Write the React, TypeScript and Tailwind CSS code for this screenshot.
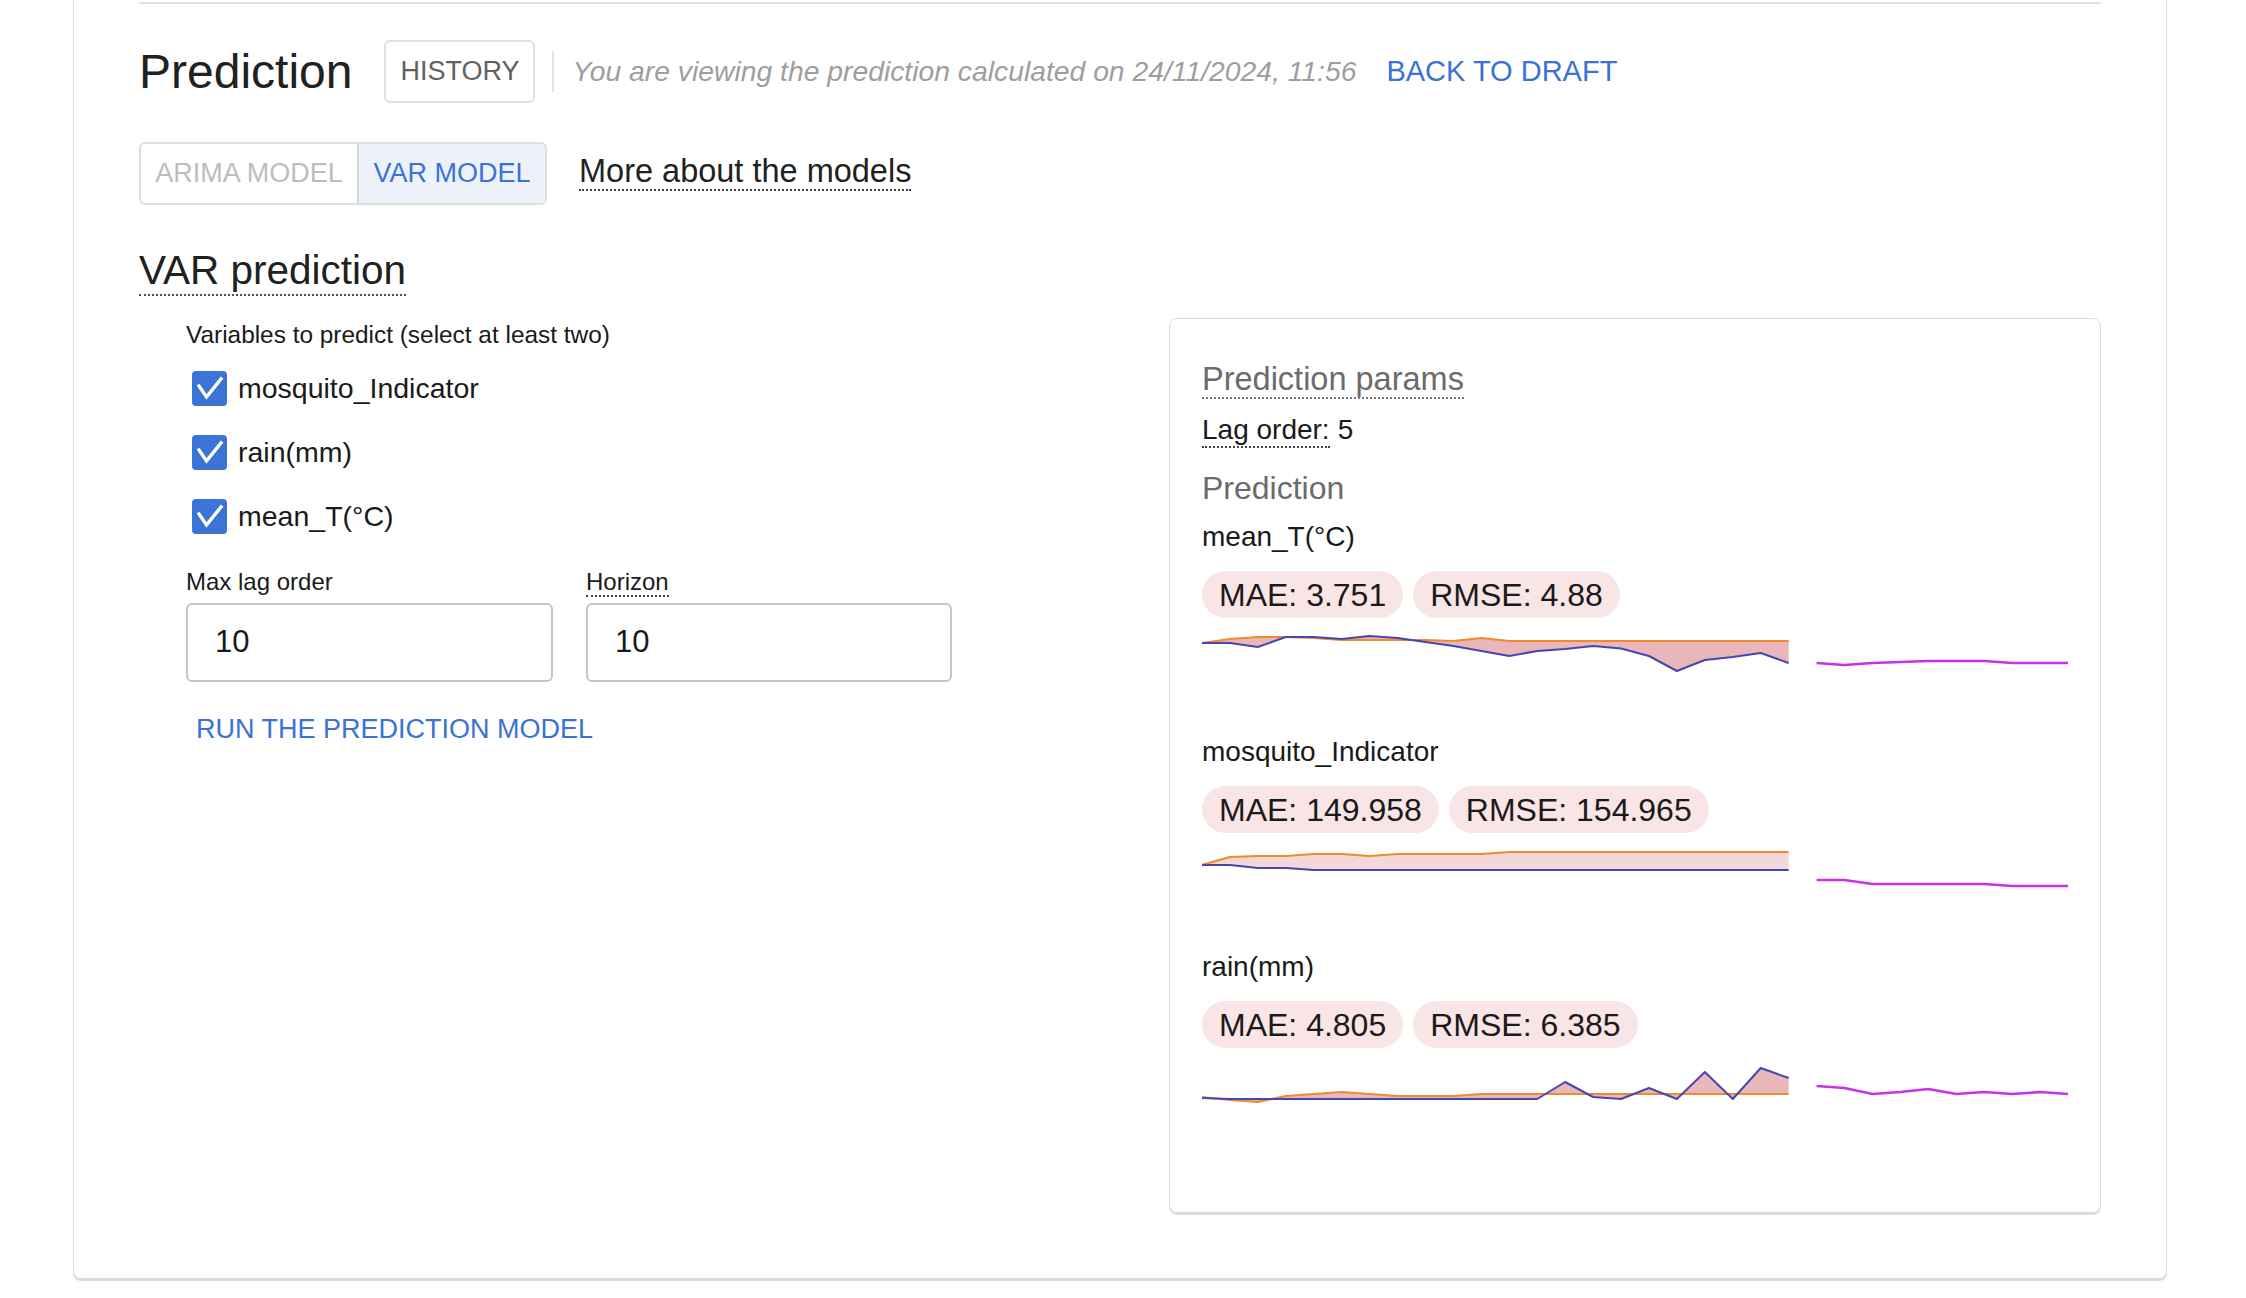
import React from "react";

const STEP = 866 / 31;

type ChartProps = {
  top: number;
  blue: number[];
  orange: number[];
  forecast: number[];
  fill: string;
};

function toPts(arr: number[], top: number, offset = 0) {
  return arr.map((y, i) => `${((i + offset) * STEP).toFixed(2)},${(y - top).toFixed(1)}`);
}

function Chart({ top, blue, orange, forecast, fill }: ChartProps) {
  const o = toPts(orange, top);
  const b = toPts(blue, top);
  const poly = [...o, ...[...b].reverse()].join(" ");
  return (
    <svg width="866" height="100" viewBox="0 0 866 100" className="block">
      <polygon points={poly} fill={fill} />
      <polyline points={o.join(" ")} fill="none" stroke="#ef8a2e" strokeWidth="2.2" strokeLinejoin="round" />
      <polyline points={b.join(" ")} fill="none" stroke="#4646b0" strokeWidth="2" strokeLinejoin="round" />
      <polyline points={toPts(forecast, top, 22).join(" ")} fill="none" stroke="#c833e6" strokeWidth="2.6" strokeLinejoin="round" />
    </svg>
  );
}

function Pill({ children }: { children: React.ReactNode }) {
  return (
    <div className="h-[47px] rounded-full bg-[#f9e4e6] px-[17px] flex items-center text-[32px] text-[#1a1a1a] leading-none whitespace-nowrap">
      {children}
    </div>
  );
}

function Section({
  label,
  mae,
  rmse,
  chart,
}: {
  label: string;
  mae: string;
  rmse: string;
  chart: ChartProps;
}) {
  return (
    <div className="mb-[14px]">
      <div className="text-[28px] leading-[36px] text-[#1a1a1a]">{label}</div>
      <div className="mt-[16px] flex gap-[10px]">
        <Pill>MAE: {mae}</Pill>
        <Pill>RMSE: {rmse}</Pill>
      </div>
      <div className="mt-[2px]">
        <Chart {...chart} />
      </div>
    </div>
  );
}

function CheckRow({ label }: { label: string }) {
  return (
    <div className="flex items-center h-[64px] pl-[6px]">
      <div className="w-[35px] h-[35px] rounded-[4px] bg-[#3b74d4] flex items-center justify-center">
        <svg width="35" height="35" viewBox="0 0 35 35">
          <polyline points="7,15 14.5,26 29,8" fill="none" stroke="#ffffff" strokeWidth="3.4" strokeLinecap="square" strokeLinejoin="miter" />
        </svg>
      </div>
      <span className="ml-[11px] text-[28.5px] text-[#1a1a1a]">{label}</span>
    </div>
  );
}

const chart1: ChartProps = {
  top: 618,
  blue: [641, 641, 645, 635, 635, 637, 634, 636, 640, 644, 649, 654, 649, 647, 644, 646.5, 654, 669, 658, 655, 651, 661],
  orange: [641, 637, 635, 635, 636, 638, 638, 638, 638, 639, 636, 639, 639, 639, 639, 639, 639, 639, 639, 639, 639, 639],
  forecast: [661, 663, 661, 660, 659, 659, 659, 661, 661, 661],
  fill: "#e9b7ba",
};

const chart2: ChartProps = {
  top: 834,
  blue: [864, 864, 867, 867, 869, 869, 869, 869, 869, 869, 869, 869, 869, 869, 869, 869, 869, 869, 869, 869, 869, 869],
  orange: [864, 856, 855, 855, 853, 853, 855, 853, 853, 853, 853, 851, 851, 851, 851, 851, 851, 851, 851, 851, 851, 851],
  forecast: [879, 879, 883, 883, 883, 883, 883, 885, 885, 885],
  fill: "#f3d7d9",
};

const chart3: ChartProps = {
  top: 1050,
  blue: [1098, 1099, 1099, 1099, 1099, 1099, 1099, 1099, 1099, 1099, 1099, 1099, 1099, 1082, 1097, 1099, 1088, 1099, 1072, 1099, 1068, 1078],
  orange: [1097, 1100, 1102, 1096, 1094, 1092, 1094, 1096, 1096, 1096, 1094, 1094, 1094, 1094, 1094, 1094, 1094, 1094, 1094, 1094, 1094, 1094],
  forecast: [1086, 1088, 1094, 1092, 1089, 1094, 1092, 1094, 1092, 1094],
  fill: "#e9b8bb",
};

export default function App() {
  return (
    <div className="min-h-screen bg-white font-['Liberation_Sans',Arial,Helvetica,sans-serif] text-[#212121]">
      <div className="ml-[73px] mr-[79px] border border-t-0 border-[#dcdcdc] rounded-b-[8px] shadow-[0_2px_0_#dcdcdc] pl-[65px] pr-[65px] pb-[65px]">
        <div className="pt-[2px]">
          <div className="h-[2px] bg-[#e0e0e0]" />
        </div>

        {/* Header row */}
        <div className="mt-[36px] flex items-center h-[63px]">
          <h1 className="text-[48px] leading-none text-[#212121] whitespace-nowrap">Prediction</h1>
          <button className="ml-[32px] h-[63px] w-[151px] rounded-[6px] border-2 border-[#e0e0e0] text-[27px] text-[#616161] flex items-center justify-center">
            HISTORY
          </button>
          <div className="ml-[17px] h-[41px] w-[2px] bg-[#e4e4e4]" />
          <span className="ml-[18px] italic text-[28.3px] text-[#9e9e9e] whitespace-nowrap">
            You are viewing the prediction calculated on 24/11/2024, 11:56
          </span>
          <button className="ml-[30px] text-[29px] text-[#3a72d5] whitespace-nowrap">BACK TO DRAFT</button>
        </div>

        {/* Tabs row */}
        <div className="mt-[39px] flex items-center">
          <div className="flex h-[63px] w-[408px] rounded-[6px] border-2 border-[#dedede] overflow-hidden">
            <div className="w-[216px] flex-none flex items-center justify-center text-[27px] text-[#bdbdbd] whitespace-nowrap">
              ARIMA MODEL
            </div>
            <div className="flex-1 border-l-2 border-[#d3d8e0] bg-[#edf2fa] flex items-center justify-center text-[27px] text-[#3a72d5] whitespace-nowrap">
              VAR MODEL
            </div>
          </div>
          <span className="ml-[32px] mb-[4px] text-[32.5px] leading-[36px] text-[#212121] border-b-2 border-dotted border-[#444] whitespace-nowrap">
            More about the models
          </span>
        </div>

        {/* VAR prediction heading */}
        <div className="mt-[41px] flex">
          <h2 className="text-[40.5px] leading-[48px] text-[#212121] border-b-2 border-dotted border-[#555] whitespace-nowrap">VAR prediction</h2>
        </div>

        {/* Two columns */}
        <div className="mt-[22px] flex">
          <div className="flex-1 pl-[47px] pt-[1px]">
            <div className="text-[24.4px] leading-[32px] text-[#1a1a1a] whitespace-nowrap">Variables to predict (select at least two)</div>
            <div className="mt-[5px]">
              <CheckRow label="mosquito_Indicator" />
              <CheckRow label="rain(mm)" />
              <CheckRow label="mean_T(°C)" />
            </div>
            <div className="mt-[20px] flex gap-[33px]">
              <div className="w-[367px]">
                <div className="flex">
                  <span className="text-[24px] leading-[28px] text-[#1a1a1a]">Max lag order</span>
                </div>
                <div className="mt-[7px] h-[79px] rounded-[6px] border-2 border-[#c6c6c6] flex items-center pl-[27px] text-[31px] text-[#1a1a1a]">
                  10
                </div>
              </div>
              <div className="w-[366px]">
                <div className="flex">
                  <span className="text-[24px] leading-[27px] text-[#1a1a1a] border-b-2 border-dotted border-[#444]">Horizon</span>
                </div>
                <div className="mt-[6px] h-[79px] rounded-[6px] border-2 border-[#c6c6c6] flex items-center pl-[27px] text-[31px] text-[#1a1a1a]">
                  10
                </div>
              </div>
            </div>
            <button className="mt-[29px] px-[10px] text-[27px] leading-[36px] text-[#3a72d5] whitespace-nowrap">
              RUN THE PREDICTION MODEL
            </button>
          </div>

          <div className="w-[932px] flex-none rounded-[8px] border border-[#d9d9d9] shadow-[0_2px_0_#dcdcdc] px-[32px] pt-[42px] pb-[48px]">
            <div className="flex">
              <span className="text-[32.5px] leading-[36px] text-[#6b6b6b] border-b-2 border-dotted border-[#777] whitespace-nowrap">
                Prediction params
              </span>
            </div>
            <div className="mt-[14px] flex text-[28px] leading-[33px] text-[#1a1a1a]">
              <span className="border-b-2 border-dotted border-[#444]">Lag order:</span>
              <span className="ml-[8px]">5</span>
            </div>
            <div className="mt-[22px] text-[32px] leading-[36px] text-[#6b6b6b]">Prediction</div>
            <div className="mt-[13px]">
              <Section label="mean_T(°C)" mae="3.751" rmse="4.88" chart={chart1} />
              <Section label="mosquito_Indicator" mae="149.958" rmse="154.965" chart={chart2} />
              <Section label="rain(mm)" mae="4.805" rmse="6.385" chart={chart3} />
            </div>
          </div>
        </div>
      </div>
    </div>
  );
}
